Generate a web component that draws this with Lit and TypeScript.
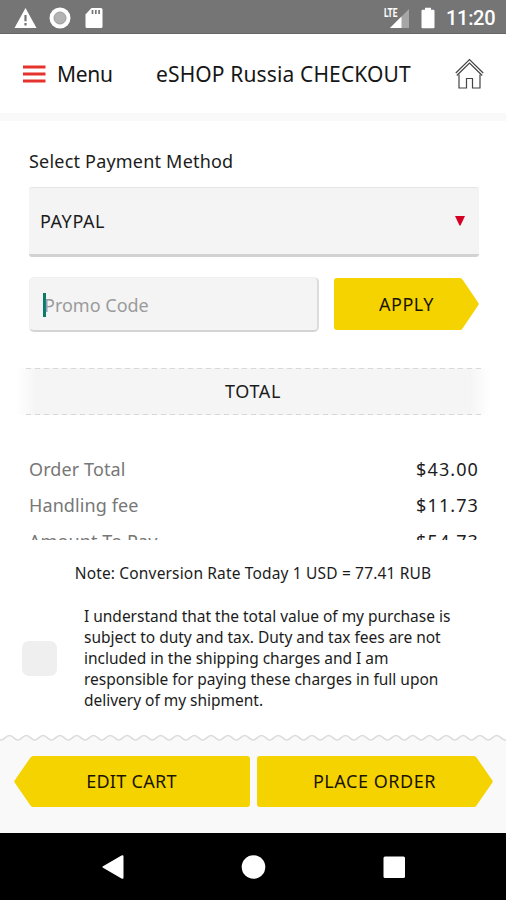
import { LitElement, html, css, svg } from "lit";
import { customElement, property } from "lit/decorators.js";
import { classMap } from "lit/directives/class-map.js";

@customElement("status-bar")
class StatusBar extends LitElement {
  static styles = css`
    :host { display: flex; align-items: center; box-sizing: border-box; height: 34px; background: #757575; border-bottom: 1px solid #666; padding: 2px 11px 0 14px; color: #fff; }
    svg { display: block; flex: none; }
    .sd { margin-left: 14px; }
    .ring { margin-left: 12px; }
    .space { flex: 1; }
    .battery { margin-left: 11px; margin-right: 11px; }
    .time { font: 500 20px/34px Roboto, sans-serif; letter-spacing: -0.3px; width: 49px; white-space: nowrap; }
    .lte { font: 700 12px Roboto, sans-serif; }
  `;
  render() {
    return html`
      <svg width="23" height="22" viewBox="0 0 23 22"><path d="M11.5 1 22.5 21H.5Z" fill="#fff"/><path d="M11.5 8v6.2M11.5 16v2.4" stroke="#757575" stroke-width="2.2"/></svg>
      <svg class="ring" width="22" height="22" viewBox="0 0 22 22"><circle cx="11" cy="11" r="10.5" fill="#fff"/><circle cx="11" cy="11" r="6" fill="#b3b3b3" stroke="#9c9c9c"/></svg>
      <svg class="sd" width="18" height="22" viewBox="0 0 18 22"><path d="M6.500 1H16q1.500 0 1.500 1.500v17q0 1.500-1.500 1.500H2q-1.500 0-1.500-1.500V7.500Z" fill="#fff"/><path d="M7.500 3v4M10.800 3v4M14.100 3v4" stroke="#757575" stroke-width="1.700"/></svg>
      <span class="space"></span>
      <svg width="26" height="22" viewBox="0 0 26 22"><path d="M25 2V21H6Z" fill="#a6a6a6"/><path d="M17.500 9.500V21H6Z" fill="#fff"/><text class="lte" x="0" y="10" textLength="13.500" lengthAdjust="spacingAndGlyphs" fill="#fff" stroke="#757575" stroke-width="1" paint-order="stroke">LTE</text></svg>
      <svg class="battery" width="14" height="22" viewBox="0 0 14 22"><path d="M4 .8h6v2h2.500q1 0 1 1v16.400q0 1-1 1h-11q-1 0-1-1V3.800q0-1 1-1H4Z" fill="#fff"/></svg>
      <span class="time">11:20</span>
    `;
  }
}

@customElement("arrow-button")
class ArrowButton extends LitElement {
  @property() label = "";
  @property() tip = "right";
  @property({ type: Number }) width = 236;
  @property({ type: Number }) height = 51;
  static styles = css`
    :host { display: block; }
    .btn { position: relative; display: flex; align-items: center; justify-content: center; font: 18px "Noto Sans", sans-serif; letter-spacing: 0.55px; color: #1a1500; }
    svg { position: absolute; inset: 0; }
    .text { position: relative; white-space: nowrap; margin-top: -1px; }
    .left .text { letter-spacing: 0.3px; }
    .small .text { letter-spacing: 0.5px; margin-top: 0; }
  `;
  render() {
    const w = this.width, h = this.height, t = w - 18;
    const d = `M3 0H${t - 1}Q${t + 0.5} 0 ${t + 1.5} 1.500L${w - 0.6} ${h / 2 - 1}Q${w} ${h / 2} ${w - 0.6} ${h / 2 + 1}L${t + 1.5} ${h - 1.5}Q${t + 0.5} ${h} ${t - 1} ${h}H3Q0 ${h} 0 ${h - 3}V3Q0 0 3 0Z`;
    const flip = this.tip === "left" ? `translate(${w} 0) scale(-1 1)` : "";
    return html`<div class=${classMap({ btn: true, small: w < 200, left: this.tip === "left" })} style="width:${w}px;height:${h}px">
      <svg width=${w} height=${h}>${svg`<path d=${d} transform=${flip} fill="#f5d300"/>`}</svg>
      <span class="text">${this.label}</span>
    </div>`;
  }
}

@customElement("app-root")
class AppRoot extends LitElement {
  static styles = css`
    :host { display: flex; flex-direction: column; height: 900px; width: 506px; background: #fff; font-family: "Noto Sans", sans-serif; color: #1c1c1c; overflow: hidden; }
    svg { display: block; flex: none; }
    .header { display: flex; align-items: center; height: 79px; border-bottom: 8px solid #f9f9f9; padding: 0 22px 0 23px; color: #161616; font-size: 21px; white-space: nowrap; }
    .menu { margin-left: 11px; width: 99px; letter-spacing: -0.3px; }
    .title { flex: 1; letter-spacing: 0.13px; }
    .content { height: 419px; overflow: hidden; box-sizing: border-box; padding: 25px 27px 0 29px; }
    .label { font-size: 18px; line-height: 31px; height: 41px; white-space: nowrap; letter-spacing: 0.2px; }
    .select { display: flex; align-items: center; justify-content: space-between; box-sizing: border-box; height: 70px; padding: 0 14px 0 11px; background: #f4f4f4; border-top: 1px solid #e4e4e4; border-bottom: 3px solid #d2d2d2; border-radius: 3px; font-size: 18px; letter-spacing: 0.6px; }
    .promo { display: flex; justify-content: space-between; align-items: center; margin-top: 20px; height: 55px; }
    .promo arrow-button { margin-bottom: 1px; }
    .field { display: flex; align-items: center; box-sizing: border-box; width: 290px; height: 55px; padding: 1px 0 0 14px; background: #f4f4f4; border-radius: 5px; border: 1px solid #f0f0f0; border-right: 2px solid #dcdcdc; border-bottom: 2px solid #d4d4d4; color: #9b9b9b; font-size: 18px; }
    .caret { width: 3px; height: 24px; background: #0b7a66; margin: 0 -2px 0 -1px; }
    .total { display: flex; align-items: center; justify-content: center; box-sizing: border-box; height: 47px; padding-bottom: 1px; margin: 36px -11px 36px -13px; position: relative; background: linear-gradient(90deg, #fff, #f5f5f5 20px, #f5f5f5 454px, #fff); font-size: 18px; letter-spacing: 0.6px; }
    .dash { position: absolute; left: 10px; right: 7px; height: 1px; background: repeating-linear-gradient(90deg, #d8d8d8 0 5px, transparent 5px 9px); }
    .top { top: 0; }
    .bottom { bottom: 0; }
    .row { display: flex; justify-content: space-between; height: 36px; line-height: 36px; font-size: 18px; }
    .name { color: #777; letter-spacing: 0.1px; }
    .value { letter-spacing: 1.1px; }
    .note { text-align: center; height: 65px; line-height: 66px; font-size: 15.500px; letter-spacing: 0.16px; }
    .agree { display: flex; align-items: center; box-sizing: border-box; height: 105px; padding: 1px 0 0 22px; font-size: 15.500px; line-height: 21px; white-space: nowrap; letter-spacing: -0.02px; }
    .check { width: 35px; height: 35px; border-radius: 7px; background: #efefef; margin-right: 27px; }
    .footer { margin-top: 23px; height: 100px; background: #fff; }
    .base { display: flex; justify-content: center; gap: 7px; background: #f9f9f9; height: 77px; padding-top: 15px; }
    .nav { height: 67px; background: #000; display: flex; align-items: center; }
  `;

  render() {
    const lines = [
      "I understand that the total value of my purchase is",
      "subject to duty and tax. Duty and tax fees are not",
      "included in the shipping charges and I am",
      "responsible for paying these charges in full upon",
      "delivery of my shipment.",
    ];
    const rows = [["Order Total", "$43.00"], ["Handling fee", "$11.73"], ["Amount To Pay", "$54.73"]];
    let wave = "M-15.700 7";
    for (let i = 0; i < 33; i++) wave += "c3.500 0 4.500 -4.500 8.400 -4.500s4.900 4.500 8.400 4.500";
    return html`
      <status-bar></status-bar>
      <div class="header">
        <svg width="23" height="20" viewBox="0 0 23 20"><path d="M0 3h22.500M0 10h22.500M0 17h22.500" stroke="#e5322d" stroke-width="2.800"/></svg>
        <span class="menu">Menu</span>
        <span class="title">eSHOP Russia CHECKOUT</span>
        <svg width="29" height="31" viewBox="0 0 29 31" fill="none" stroke="#444" stroke-width="1.200"><path d="M.8 15 14.500 1.500 28.200 15"/><path d="M4 16.500V30H11.500V20.500H17.500V30H25V16.500"/><path d="M1.800 17.500 14.500 5 27.200 17.500"/></svg>
      </div>
      <div class="content">
        <div class="label"><span>Select Payment Method</span></div>
        <div class="select"><span>PAYPAL</span><svg width="10" height="10"><path d="M0 0H10L5.500 9.500H4.500Z" fill="#d40023"/></svg></div>
        <div class="promo">
          <div class="field"><i class="caret"></i><span>Promo Code</span></div>
          <arrow-button label="APPLY" width="145" height="52"></arrow-button>
        </div>
        <div class="total"><i class="dash top"></i><span>TOTAL</span><i class="dash bottom"></i></div>
        ${rows.map(([n, v]) => html`<div class="row"><span class="name">${n}</span><span class="value">${v}</span></div>`)}
      </div>
      <div class="note"><span>Note: Conversion Rate Today 1 USD = 77.41 RUB</span></div>
      <div class="agree"><i class="check"></i><div>${lines.map((l) => html`<div><span>${l}</span></div>`)}</div></div>
      <div class="footer">
        <svg width="506" height="8" viewBox="0 0 506 8"><path d="${wave}V20H-18Z" fill="#f9f9f9" stroke="#dcdcdc" stroke-width="1.600"/></svg>
        <div class="base">
          <arrow-button label="EDIT CART" tip="left"></arrow-button>
          <arrow-button label="PLACE ORDER"></arrow-button>
        </div>
      </div>
      <div class="nav">
        <svg width="506" height="67" viewBox="0 0 506 67" fill="#fff"><path d="M121.500 22.600Q123.500 21.500 123.500 23.500V44.500Q123.500 46.500 121.500 45.400L103 34.800Q101.500 34 103 33.200Z"/><circle cx="253.500" cy="34" r="11.800"/><rect x="383.500" y="23.500" width="21.500" height="21.500" rx="1.500"/></svg>
      </div>
    `;
  }
}
